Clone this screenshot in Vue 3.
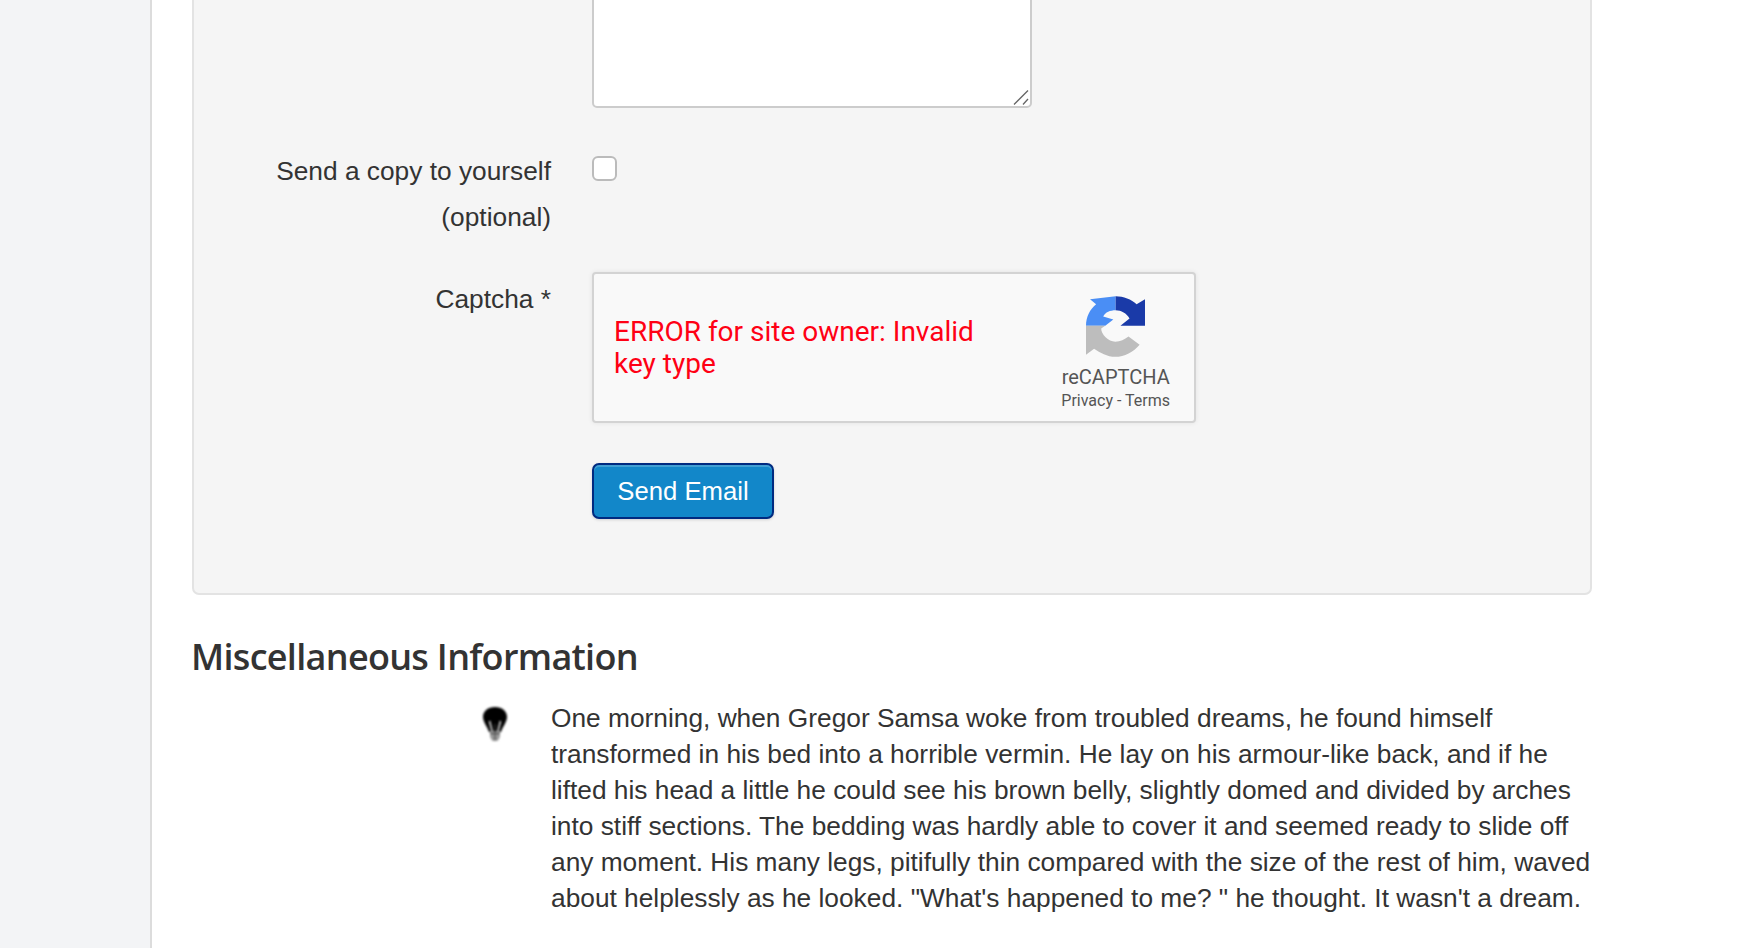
<template>
  <div class="page">
    <aside class="sidebar"></aside>
    <main class="content">
      <form class="well" @submit.prevent>
        <div class="row row-message">
          <label class="label"></label>
          <div class="message-box">
            <textarea class="message"></textarea>
            <svg class="grip" viewBox="0 0 16 15" width="16" height="15">
              <path fill="none" stroke="#666" stroke-width="1.3" d="M1 14.500 15 .5M10 14.500 15 9" />
            </svg>
          </div>
        </div>
        <div class="row row-copy">
          <label class="label">Send a copy to yourself (optional)</label>
          <input class="check" type="checkbox" />
        </div>
        <div class="row row-captcha">
          <label class="label">Captcha *</label>
          <div class="captcha">
            <div class="captcha-error">ERROR for site owner: Invalid key type</div>
            <div class="captcha-brand">
              <svg class="captcha-logo" viewBox="0 0 58.300 60" width="59" height="61">
                <path fill="#4a8ef5" d="M0 29.300C0 20 4 13 10 8L4 3 29.300 0V14C24 14 19 16 17 20L27 23 19 29.300Z" />
                <path fill="#1a3aa8" d="M29.300 0C37 0 45 3 50 8L58.300 3V29.300H34L43 22C40 17 35 14 29.300 14Z" />
                <path fill="#bdbdbd" d="M0 29.300H19L15 32C15 38 22 45 29 45 34 45 38 43 42 40L53 48C47 55 38 60 29 60 21 60 14 56 8 52L0 58Z" />
              </svg>
              <div class="captcha-name">reCAPTCHA</div>
              <div class="captcha-links">Privacy - Terms</div>
            </div>
          </div>
        </div>
        <div class="row row-submit">
          <span></span>
          <button class="send" type="submit">Send Email</button>
        </div>
      </form>

      <h2 class="misc-title">Miscellaneous Information</h2>
      <div class="misc">
        <div class="misc-icon">
          <svg viewBox="0 0 26 36" width="26" height="36">
            <path fill="#000" d="M13 1C6 1 1 5 1 11 1 16 5 20 7 26H19C21 20 25 16 25 11 25 5 20 1 13 1Z" />
            <path fill="none" stroke="#c8c8c8" stroke-width="1.8" d="M7.500 15 10 25M18.500 15 16 25" />
            <path fill="#999" d="M8 25H18V31L15.500 35H10.500L8 31Z" />
            <path fill="none" stroke="#444" stroke-width="1" d="M13 18V34M8 27.500H18" />
          </svg>
        </div>
        <p class="misc-text">One morning, when Gregor Samsa woke from troubled dreams, he found himself transformed in his bed into a horrible vermin. He lay on his armour-like back, and if he lifted his head a little he could see his brown belly, slightly domed and divided by arches into stiff sections. The bedding was hardly able to cover it and seemed ready to slide off any moment. His many legs, pitifully thin compared with the size of the rest of him, waved about helplessly as he looked. "What's happened to me? " he thought. It wasn't a dream.</p>
      </div>
    </main>
  </div>
</template>

<script setup>
</script>

<style>
html,
body {
  margin: 0;
  overflow: hidden;
}
</style>

<style scoped>
.page {
  display: flex;
  height: 948px;
  overflow: hidden;
  font-family: "Liberation Sans", Arial, sans-serif;
  color: #333;
}

.sidebar {
  width: 150px;
  flex: none;
  background: #f3f4f6;
}

.content {
  flex: 1;
  border-left: 2px solid #dcdcdc;
  background: #fff;
  padding: 0 158px 0 40px;
}

.well {
  margin-top: -20px;
  height: 615px;
  box-sizing: border-box;
  background: #f5f5f5;
  border: 2px solid #e3e3e3;
  border-radius: 7px;
}

.row {
  display: grid;
  grid-template-columns: 357px 1fr;
  column-gap: 41px;
  align-items: start;
}

.label {
  font-size: 26.3px;
  line-height: 46px;
  text-align: right;
  padding-left: 40px;
}

.message-box {
  position: relative;
  width: 440px;
}

.message {
  display: block;
  width: 440px;
  height: 126px;
  box-sizing: border-box;
  margin: 0;
  background: #fff;
  border: 2px solid #ccc;
  border-radius: 5px;
  resize: none;
}

.grip {
  position: absolute;
  right: 3px;
  bottom: 3px;
}

.row-copy {
  margin-top: 40px;
}

.check {
  appearance: none;
  width: 25px;
  height: 25px;
  margin: 8px 0 0;
  background: #fff;
  border: 2px solid #bbb;
  border-radius: 6px;
}

.row-captcha {
  margin-top: 32px;
}

.row-captcha .label {
  padding-top: 4px;
}

.captcha {
  width: 604px;
  height: 151px;
  box-sizing: border-box;
  display: flex;
  align-items: center;
  justify-content: space-between;
  padding: 0 24px 0 20px;
  background: #f9f9f9;
  border: 2px solid #d3d3d3;
  border-radius: 4px;
  box-shadow: 0 0 5px rgba(0, 0, 0, 0.08);
  font-family: Roboto, sans-serif;
}

.captcha-error {
  width: 370px;
  font-size: 28px;
  line-height: 32px;
  color: #ff0014;
}

.captcha-brand {
  display: flex;
  flex-direction: column;
  align-items: center;
  margin-top: 13px;
  color: #555;
}

.captcha-logo {
  display: block;
  margin-bottom: 8px;
  filter: blur(0.4px);
}

.captcha-name {
  font-size: 20px;
  line-height: 24px;
}

.captcha-links {
  font-size: 16px;
  line-height: 22px;
  margin-top: 1px;
}

.row-submit {
  margin-top: 40px;
}

.send {
  width: 182px;
  height: 56px;
  box-sizing: border-box;
  background: #1287c9;
  border: 2px solid #002a80;
  border-radius: 7px;
  box-shadow: inset 0 2px 0 rgba(255, 255, 255, 0.2), 0 1px 3px rgba(0, 0, 0, 0.15);
  color: #fff;
  font-family: "Liberation Sans", Arial, sans-serif;
  font-size: 25.7px;
}

.misc-title {
  margin: 36px 0 0 -1px;
  font-family: "Open Sans", sans-serif;
  font-size: 36px;
  font-weight: 600;
  line-height: 52px;
  letter-spacing: -0.7px;
  color: #333;
}

.misc {
  display: flex;
  margin-top: 16.500px;
}

.misc-icon {
  width: 359px;
  flex: none;
  box-sizing: border-box;
  display: flex;
  justify-content: flex-end;
  padding: 6px 43px 0 0;
}

.misc-icon svg {
  filter: blur(0.8px);
}

.misc-text {
  margin: 0;
  flex: 1;
  font-size: 26.3px;
  line-height: 36px;
}
</style>
